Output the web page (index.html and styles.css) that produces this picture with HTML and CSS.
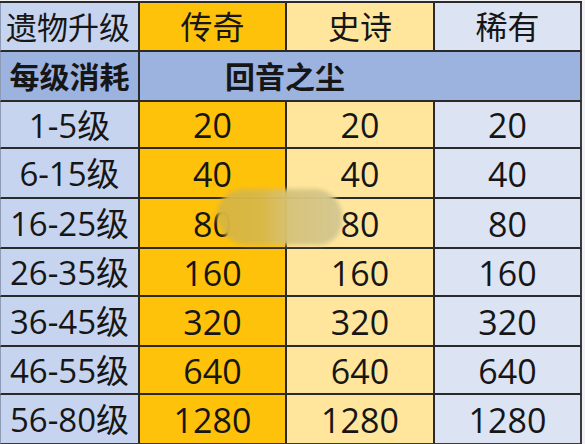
FILE: index.html
```html
<!DOCTYPE html>
<html lang="zh-CN">
<head>
<meta charset="utf-8">
<link rel="stylesheet" href="styles.css">
</head>
<body>
<div class="wrap">
  <div class="grid">
    <div class="c lv hd-l">遗物升级</div>
    <div class="c leg hd">传奇</div>
    <div class="c epi hd">史诗</div>
    <div class="c rar hd end">稀有</div>

    <div class="c sub b">每级消耗</div>
    <div class="c sub b span end">回音之尘</div>

    <div class="c lv n">1-5级</div><div class="c leg n">20</div><div class="c epi n">20</div><div class="c rar end n">20</div>
    <div class="c lv n">6-15级</div><div class="c leg n">40</div><div class="c epi n">40</div><div class="c rar end n">40</div>
    <div class="c lv n">16-25级</div><div class="c leg n">80</div><div class="c epi n">80</div><div class="c rar end n">80</div>
    <div class="c lv n">26-35级</div><div class="c leg n">160</div><div class="c epi n">160</div><div class="c rar end n">160</div>
    <div class="c lv n">36-45级</div><div class="c leg n">320</div><div class="c epi n">320</div><div class="c rar end n">320</div>
    <div class="c lv n">46-55级</div><div class="c leg n">640</div><div class="c epi n">640</div><div class="c rar end n">640</div>
    <div class="c lv n last">56-80级</div><div class="c leg n last">1280</div><div class="c epi n last">1280</div><div class="c rar end n last">1280</div>
  </div>
  <div class="smudge"></div>
</div>
</body>
</html>
```
FILE: styles.css
```css
html, body {
  margin: 0;
  padding: 0;
  background: #f2f2f6;
}
.wrap {
  position: relative;
  width: 585px;
  height: 444px;
  padding-top: 1px;
  box-sizing: border-box;
}
.grid {
  display: grid;
  grid-template-columns: 140px 147px 148px 147px;
  grid-template-rows: 49px 50px 47px 50px 50px 48px 50px 48px 49px;
  width: 582px;
  border-top: 2px solid #2a2a2a;
  box-sizing: border-box;
  font-family: "Open Sans", "Noto Sans CJK SC", sans-serif;
  font-size: 31px;
  color: #161616;
}
.c {
  display: flex;
  align-items: center;
  justify-content: center;
  border-right: 2px solid #2a2a2a;
  border-bottom: 2px solid #2a2a2a;
  line-height: 1;
  padding-top: 1px;
}
.c.n { font-size: 34px; }
.c.lv.n { font-size: 33px; }
.c.hd { font-size: 32px; }
.c.end { border-right: 2px solid #3a3a3a; }
.c.last { border-bottom: 1px solid #3a3a3a; }
.lv { background: #c6d4ef; border-left: 1px solid #8e9bb5; }
.hd-l { justify-content: flex-start; padding-left: 5px; }
.leg { background: #ffc20a; }
.epi { background: #ffe69c; }
.rar { background: #dce3f3; }
.sub { background: #9cb3e0; }
.sub.b { font-weight: 700; font-size: 30px; }
.grid > .sub:nth-child(5) { border-left: 1px solid #8e9bb5; }
.span {
  grid-column: 2 / 5;
  justify-content: flex-start;
  padding-left: 85px;
}
.smudge {
  position: absolute;
  left: 217px;
  top: 189px;
  width: 125px;
  height: 56px;
  border-radius: 28px 30px 26px 34px;
  background: linear-gradient(90deg, #d7b540 0%, #d9b848 35%, #d6c37c 60%, #d4c892 100%);
  filter: blur(2px);
  opacity: 0.97;
}
```
